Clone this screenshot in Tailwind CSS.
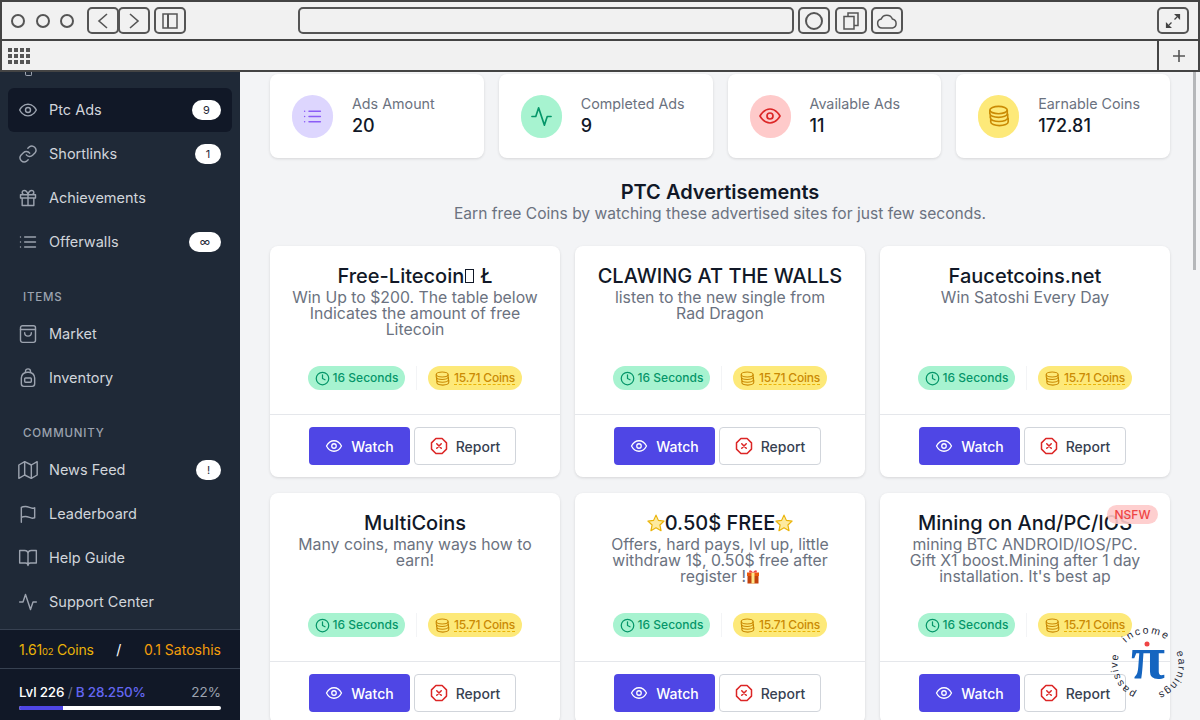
<!DOCTYPE html>
<html lang="en">
<head>
    <meta charset="UTF-8">
    <meta name="viewport" content="width=device-width, initial-scale=1.0">
    <title>PTC Advertisements</title>
    <script src="https://cdn.jsdelivr.net/npm/@tailwindcss/browser@4"></script>
</head>
<body class="bg-[#f3f4f6] font-['Inter',sans-serif]">
<svg class="hidden">
    <defs>
        <symbol id="eye" viewBox="0 0 24 24" fill="none" stroke="currentColor" stroke-width="1.7" stroke-linecap="round" stroke-linejoin="round"><path d="M2 12s3.6-7 10-7 10 7 10 7-3.6 7-10 7-10-7-10-7z"/><circle cx="12" cy="12" r="3"/></symbol>
        <symbol id="list" viewBox="0 0 24 24" fill="none" stroke="currentColor" stroke-width="1.7" stroke-linecap="round" stroke-linejoin="round"><path d="M8 6h13M8 12h13M8 18h13M3 6h.01M3 12h.01M3 18h.01"/></symbol>
        <symbol id="pulse" viewBox="0 0 24 24" fill="none" stroke="currentColor" stroke-width="1.7" stroke-linecap="round" stroke-linejoin="round"><path d="M22 12h-4l-3 9L9 3l-3 9H2"/></symbol>
        <symbol id="coins" viewBox="0 0 24 24" fill="none" stroke="currentColor" stroke-width="1.8"><ellipse cx="11.5" cy="5.5" rx="9.5" ry="4"/><path d="M2 5.5v4c0 2.2 4.3 4 9.5 4s9.5-1.8 9.5-4v-4M2.5 9.5V14c0 2.2 4.3 4 9.5 4s9.5-1.8 9.5-4V9.5M3 14v4.5c0 2.2 4.3 4 9.5 4s9.5-1.8 9.5-4V14"/></symbol>
        <symbol id="clock" viewBox="0 0 24 24" fill="none" stroke="currentColor" stroke-width="2" stroke-linecap="round" stroke-linejoin="round"><circle cx="12" cy="12" r="10"/><path d="M12 6v6l4 2"/></symbol>
        <symbol id="octagon" viewBox="0 0 24 24" fill="none" stroke="currentColor" stroke-width="2" stroke-linecap="round" stroke-linejoin="round"><path d="M7.86 2h8.28L22 7.86v8.28L16.14 22H7.86L2 16.14V7.86z"/><path d="M15 9l-6 6M9 9l6 6"/></symbol>
        <symbol id="star" viewBox="0 0 24 24"><path d="M12 1.5l3.2 7 7.6.9-5.6 5.2 1.5 7.6-6.7-3.8-6.7 3.8 1.5-7.6L1.2 9.4l7.6-.9z" fill="#fdeaa0" stroke="#eab308" stroke-width="1.6" stroke-linejoin="round"/></symbol>
    </defs>
</svg>

<div class="w-[1200px] h-[720px] overflow-hidden relative flex flex-col">
    <!-- browser chrome -->
    <header class="h-[41px] shrink-0 bg-[#f1f1f1] border-t-2 border-b-2 border-x-2 border-[#444] flex items-center text-[#444] relative z-10">
        <div class="flex items-center gap-[10.5px] ml-[9px]">
            <span class="w-[14px] h-[14px] rounded-full border-2 border-[#555]"></span>
            <span class="w-[14px] h-[14px] rounded-full border-2 border-[#555]"></span>
            <span class="w-[14px] h-[14px] rounded-full border-2 border-[#555]"></span>
        </div>
        <div class="flex ml-[13px]">
            <span class="w-[32px] h-[27px] rounded-[5px] border-2 border-[#555] flex items-center justify-center">
                <svg class="w-[12px] h-[16px]" viewBox="0 0 12 16" fill="none" stroke="#555" stroke-width="1.6"><path d="M10 1L2 8l8 7"/></svg>
            </span>
            <span class="w-[32px] h-[27px] -ml-[1px] rounded-[5px] border-2 border-[#555] flex items-center justify-center">
                <svg class="w-[12px] h-[16px]" viewBox="0 0 12 16" fill="none" stroke="#555" stroke-width="1.6"><path d="M2 1l8 7-8 7"/></svg>
            </span>
        </div>
        <span class="ml-[4px] w-[32px] h-[27px] rounded-[5px] border-2 border-[#555] flex items-center justify-center">
            <svg class="w-[16px] h-[16px]" viewBox="0 0 16 16" fill="none" stroke="#555" stroke-width="1.5"><rect x="1" y="1" width="14" height="14"/><path d="M6 1v14" stroke-width="2"/></svg>
        </span>
        <span class="ml-[111.5px] w-[496px] h-[27px] rounded-[5px] border-2 border-[#555]"></span>
        <span class="ml-[4px] w-[32px] h-[27px] rounded-[5px] border-2 border-[#555] flex items-center justify-center">
            <span class="w-[18px] h-[18px] rounded-full border-2 border-[#555]"></span>
        </span>
        <span class="ml-[5px] w-[32px] h-[27px] rounded-[5px] border-2 border-[#555] flex items-center justify-center">
            <svg class="w-[16px] h-[18px]" viewBox="0 0 16 18" fill="none" stroke="#555" stroke-width="1.5"><rect x="1" y="4.5" width="10" height="12.5"/><path d="M5 4.5V1h10v12.5h-4"/></svg>
        </span>
        <span class="ml-[4px] w-[32px] h-[27px] rounded-[5px] border-2 border-[#555] flex items-center justify-center">
            <svg class="w-[22px] h-[16px]" viewBox="0 0 22 16" fill="none" stroke="#555" stroke-width="1.5"><path d="M6 15a4.5 4.5 0 0 1-.8-8.9A6 6 0 0 1 16.4 6 4.6 4.6 0 0 1 16.5 15z"/></svg>
        </span>
        <span class="ml-auto mr-[9px] w-[32px] h-[27px] rounded-[5px] border-2 border-[#555] flex items-center justify-center">
            <svg class="w-[16px] h-[16px]" viewBox="0 0 16 16" fill="#444" stroke="#444" stroke-width="1.2"><path d="M9.5 6.5L12 4" fill="none"/><path d="M10.5 1.5h4v4z"/><path d="M6.5 9.5L4 12" fill="none"/><path d="M1.5 10.5v4h4z"/></svg>
        </span>
    </header>
    <div class="h-[31px] shrink-0 bg-[#f1f1f1] border-b-2 border-x-2 border-[#444] flex items-center justify-between relative z-10">
        <div class="grid grid-cols-4 gap-[2px] ml-[6px]">
            <i class="w-[4px] h-[4px] bg-[#555]"></i><i class="w-[4px] h-[4px] bg-[#555]"></i><i class="w-[4px] h-[4px] bg-[#555]"></i><i class="w-[4px] h-[4px] bg-[#555]"></i>
            <i class="w-[4px] h-[4px] bg-[#555]"></i><i class="w-[4px] h-[4px] bg-[#555]"></i><i class="w-[4px] h-[4px] bg-[#555]"></i><i class="w-[4px] h-[4px] bg-[#555]"></i>
            <i class="w-[4px] h-[4px] bg-[#555]"></i><i class="w-[4px] h-[4px] bg-[#555]"></i><i class="w-[4px] h-[4px] bg-[#555]"></i><i class="w-[4px] h-[4px] bg-[#555]"></i>
        </div>
        <div class="w-[41px] h-full border-l-2 border-[#444] flex items-center justify-center">
            <svg class="w-[14px] h-[14px]" viewBox="0 0 14 14" stroke="#555" stroke-width="1.6"><path d="M7 1v12M1 7h12"/></svg>
        </div>
    </div>

    <div class="flex flex-1 min-h-0">
        <!-- sidebar -->
        <aside class="w-[240px] shrink-0 bg-[#1f2937] flex flex-col text-[14.5px] text-[#d1d5db]">
            <nav class="flex-1 min-h-0 overflow-hidden px-[8px]">
                <span class="block h-[4px] w-[7px] ml-[17px] mb-[12px] border-x border-b border-[#9ca3af] rounded-b-[2px]"></span>
                <a class="h-[44px] rounded-[6px] bg-[#111827] flex items-center pl-[10px] pr-[11px] gap-[11px]">
                    <svg class="w-[20px] h-[20px] text-[#9ca3af]"><use href="#eye"/></svg><span>Ptc Ads</span>
                    <span class="ml-auto w-[29px] h-[20px] rounded-full bg-white text-[#1f2937] text-[11px] flex items-center justify-center">9</span>
                </a>
                <a class="h-[44px] flex items-center pl-[10px] pr-[11px] gap-[11px]">
                    <svg class="w-[20px] h-[20px] text-[#9ca3af]" viewBox="0 0 24 24" fill="none" stroke="currentColor" stroke-width="1.7" stroke-linecap="round" stroke-linejoin="round"><path d="M10 13a5 5 0 0 0 7.5.5l3-3a5 5 0 0 0-7-7l-1.7 1.7"/><path d="M14 11a5 5 0 0 0-7.5-.5l-3 3a5 5 0 0 0 7 7l1.7-1.7"/></svg><span>Shortlinks</span>
                    <span class="ml-auto w-[26px] h-[20px] rounded-full bg-white text-[#1f2937] text-[11px] flex items-center justify-center">1</span>
                </a>
                <a class="h-[44px] flex items-center pl-[10px] pr-[11px] gap-[11px]">
                    <svg class="w-[20px] h-[20px] text-[#9ca3af]" viewBox="0 0 24 24" fill="none" stroke="currentColor" stroke-width="1.7" stroke-linecap="round" stroke-linejoin="round"><path d="M3 8h18v4H3zM5 12v9h14v-9M12 8v13M12 8H7.5a2.5 2.5 0 0 1 0-5C11 3 12 8 12 8zM12 8h4.5a2.5 2.5 0 0 0 0-5C13 3 12 8 12 8z"/></svg><span>Achievements</span>
                </a>
                <a class="h-[44px] flex items-center pl-[10px] pr-[11px] gap-[11px]">
                    <svg class="w-[20px] h-[20px] text-[#9ca3af]"><use href="#list"/></svg><span>Offerwalls</span>
                    <span class="ml-auto w-[32px] h-[20px] rounded-full bg-white text-[#1f2937] text-[11px] flex items-center justify-center">∞</span>
                </a>
                <p class="h-[11px] mt-[28px] mb-[9px] pl-[15px] flex items-center text-[11.5px] font-medium tracking-[0.8px] text-[#9ca3af]">ITEMS</p>
                <a class="h-[44px] flex items-center pl-[10px] pr-[11px] gap-[11px]">
                    <svg class="w-[20px] h-[20px] text-[#9ca3af]" viewBox="0 0 24 24" fill="none" stroke="currentColor" stroke-width="1.7" stroke-linecap="round" stroke-linejoin="round"><rect x="3" y="2" width="18" height="20" rx="2.5"/><path d="M3 6.5h18M8 10.5a4 4 0 0 0 8 0"/></svg><span>Market</span>
                </a>
                <a class="h-[44px] flex items-center pl-[10px] pr-[11px] gap-[11px]">
                    <svg class="w-[20px] h-[20px] text-[#9ca3af]" viewBox="0 0 24 24" fill="none" stroke="currentColor" stroke-width="1.7" stroke-linecap="round" stroke-linejoin="round"><path d="M4 12a7 7 0 0 1 7-7h2a7 7 0 0 1 7 7v7a3 3 0 0 1-3 3H7a3 3 0 0 1-3-3z"/><path d="M9 5V4a3 3 0 0 1 6 0v1"/><rect x="8" y="12" width="8" height="5" rx="1"/></svg><span>Inventory</span>
                </a>
                <p class="h-[11px] mt-[28px] mb-[9px] pl-[15px] flex items-center text-[11.5px] font-medium tracking-[0.8px] text-[#9ca3af]">COMMUNITY</p>
                <a class="h-[44px] flex items-center pl-[10px] pr-[11px] gap-[11px]">
                    <svg class="w-[20px] h-[20px] text-[#9ca3af]" viewBox="0 0 24 24" fill="none" stroke="currentColor" stroke-width="1.7" stroke-linecap="round" stroke-linejoin="round"><path d="M1 6v16l7-4 8 4 7-4V2l-7 4-8-4z"/><path d="M8 2v16M16 6v16"/></svg><span>News Feed</span>
                    <span class="ml-auto w-[25px] h-[20px] rounded-full bg-white text-[#1f2937] text-[11px] flex items-center justify-center">!</span>
                </a>
                <a class="h-[44px] flex items-center pl-[10px] pr-[11px] gap-[11px]">
                    <svg class="w-[20px] h-[20px] text-[#9ca3af]" viewBox="0 0 24 24" fill="none" stroke="currentColor" stroke-width="1.7" stroke-linecap="round" stroke-linejoin="round"><path d="M4 22V4s1.5-1 5-1 5.5 2 8 2 3-.5 3-.5v12s-1 .5-3 .5-5-2-8-2-5 1-5 1"/></svg><span>Leaderboard</span>
                </a>
                <a class="h-[44px] flex items-center pl-[10px] pr-[11px] gap-[11px]">
                    <svg class="w-[20px] h-[20px] text-[#9ca3af]" viewBox="0 0 24 24" fill="none" stroke="currentColor" stroke-width="1.7" stroke-linecap="round" stroke-linejoin="round"><path d="M2 3h6a4 4 0 0 1 4 4v14a3 3 0 0 0-3-3H2zM22 3h-6a4 4 0 0 0-4 4v14a3 3 0 0 1 3-3h7z"/></svg><span>Help Guide</span>
                </a>
                <a class="h-[44px] flex items-center pl-[10px] pr-[11px] gap-[11px]">
                    <svg class="w-[20px] h-[20px] text-[#9ca3af]"><use href="#pulse"/></svg><span>Support Center</span>
                </a>
            </nav>
            <div class="h-[40px] shrink-0 bg-[#111827] border-y border-[#374151] px-[19px] flex items-center justify-between text-[14px]">
                <span class="text-[#eab308] tracking-[-0.2px]">1.61<span class="text-[9.5px]">02</span> Coins</span>
                <span class="text-white">/</span>
                <span class="text-[#f59e0b]">0.1 Satoshis</span>
            </div>
            <div class="h-[51px] shrink-0 bg-[#111827] px-[19px] pt-[14px]">
                <div class="flex justify-between text-[13.5px] leading-[18px]">
                    <span class="text-white font-medium tracking-[-0.2px]">Lvl 226 <span class="text-[#6b7280] font-normal">/</span> <span class="text-[#6366f1]">B 28.250%</span></span>
                    <span class="text-[#9ca3af]">22%</span>
                </div>
                <div class="h-[4px] mt-[5px] rounded-full bg-white overflow-hidden">
                    <div class="h-full bg-[#4f46e5]" style="width: 22%"></div>
                </div>
            </div>
        </aside>

        <!-- main -->
        <main class="flex-1 min-w-0 relative overflow-hidden px-[30px] text-[#111827]">
            <div class="absolute right-[4px] top-0 w-[3px] h-[198px] bg-[#b5b7ba]"></div>

            <section class="grid grid-cols-4 gap-[15px] mt-[2px]">
                <div class="h-[84px] bg-white rounded-[8px] shadow-[0_1px_3px_rgba(0,0,0,0.12)] flex items-center pl-[22px] gap-[19px]">
                    <span class="w-[41px] h-[43px] rounded-full bg-[#ddd6fe] text-[#8b5cf6] flex items-center justify-center"><svg class="w-[21px] h-[21px]"><use href="#list"/></svg></span>
                    <div class="pt-[2px]"><p class="text-[14.3px] leading-[18px] text-[#6b7280]">Ads Amount</p><p class="text-[18px] leading-[26px] font-medium">20</p></div>
                </div>
                <div class="h-[84px] bg-white rounded-[8px] shadow-[0_1px_3px_rgba(0,0,0,0.12)] flex items-center pl-[22px] gap-[19px]">
                    <span class="w-[41px] h-[43px] rounded-full bg-[#a7f3d0] text-[#059669] flex items-center justify-center"><svg class="w-[23px] h-[23px]"><use href="#pulse"/></svg></span>
                    <div class="pt-[2px]"><p class="text-[14.3px] leading-[18px] text-[#6b7280]">Completed Ads</p><p class="text-[18px] leading-[26px] font-medium">9</p></div>
                </div>
                <div class="h-[84px] bg-white rounded-[8px] shadow-[0_1px_3px_rgba(0,0,0,0.12)] flex items-center pl-[22px] gap-[19px]">
                    <span class="w-[41px] h-[43px] rounded-full bg-[#fecaca] text-[#dc2626] flex items-center justify-center"><svg class="w-[24px] h-[24px]"><use href="#eye"/></svg></span>
                    <div class="pt-[2px]"><p class="text-[14.3px] leading-[18px] text-[#6b7280]">Available Ads</p><p class="text-[18px] leading-[26px] font-medium">11</p></div>
                </div>
                <div class="h-[84px] bg-white rounded-[8px] shadow-[0_1px_3px_rgba(0,0,0,0.12)] flex items-center pl-[22px] gap-[19px]">
                    <span class="w-[41px] h-[43px] rounded-full bg-[#fde979] text-[#ca8a04] flex items-center justify-center"><svg class="w-[22px] h-[22px]"><use href="#coins"/></svg></span>
                    <div class="pt-[2px]"><p class="text-[14.3px] leading-[18px] text-[#6b7280]">Earnable Coins</p><p class="text-[18px] leading-[26px] font-medium">172.81</p></div>
                </div>
            </section>

            <div class="text-center mt-[22px] mb-[22px]">
                <h1 class="text-[20px] leading-[24px] font-semibold">PTC Advertisements</h1>
                <p class="text-[15.6px] leading-[20px] text-[#6b7280]">Earn free Coins by watching these advertised sites for just few seconds.</p>
            </div>

            <section class="grid grid-cols-3 gap-x-[15px] gap-y-[16px]">
                <article class="h-[231px] bg-white rounded-[8px] shadow-[0_1px_3px_rgba(0,0,0,0.12)] flex flex-col">
                    <div class="h-[168px] px-[20px] pt-[18px] text-center">
                        <h2 class="text-[20px] leading-[24px] font-medium">Free-Litecoin<span class="inline-block w-[9px] h-[14px] border border-[#111827] mx-[1px]"></span> Ł</h2>
                        <p class="mt-[2px] text-[15.8px] leading-[16px] text-[#6b7280] h-[48px]">Win Up to $200. The table below Indicates the amount of free Litecoin</p>
                        <div class="flex justify-center items-center mt-[28px]">
                            <span class="h-[24px] w-[97px] rounded-full bg-[#a7f3d0] text-[#059669] text-[12px] font-medium flex items-center justify-center gap-[3px]"><svg class="w-[15px] h-[15px]"><use href="#clock"/></svg>16 Seconds</span>
                            <span class="w-px h-[24px] bg-[#f3f4f6] mx-[11px]"></span>
                            <span class="h-[24px] w-[94px] rounded-full bg-[#fde979] text-[#ca8a04] text-[12px] font-medium flex items-center justify-center gap-[4px]"><svg class="w-[15px] h-[15px]"><use href="#coins"/></svg><span class="border-b border-dashed border-[#eab308] leading-[13px] tracking-[-0.2px]">15.71 Coins</span></span>
                        </div>
                    </div>
                    <div class="flex-1 border-t border-[#e5e7eb] flex justify-center items-start pt-[12px] pr-[5px] gap-[4px]">
                        <button class="w-[101px] h-[38px] rounded-[4px] bg-[#4f46e5] text-white text-[14px] font-medium flex items-center justify-center gap-[8px]"><svg class="w-[18px] h-[18px]"><use href="#eye"/></svg>Watch</button>
                        <button class="w-[102px] h-[38px] rounded-[4px] bg-white border border-[#d1d5db] text-[#374151] text-[14px] font-medium flex items-center justify-center gap-[8px]"><svg class="w-[18px] h-[18px] text-[#dc2626]"><use href="#octagon"/></svg>Report</button>
                    </div>
                </article>
                <article class="h-[231px] bg-white rounded-[8px] shadow-[0_1px_3px_rgba(0,0,0,0.12)] flex flex-col">
                    <div class="h-[168px] px-[20px] pt-[18px] text-center">
                        <h2 class="text-[20px] leading-[24px] font-medium">CLAWING AT THE WALLS</h2>
                        <p class="mt-[2px] text-[15.8px] leading-[16px] text-[#6b7280] h-[48px]">listen to the new single from<br>Rad Dragon</p>
                        <div class="flex justify-center items-center mt-[28px]">
                            <span class="h-[24px] w-[97px] rounded-full bg-[#a7f3d0] text-[#059669] text-[12px] font-medium flex items-center justify-center gap-[3px]"><svg class="w-[15px] h-[15px]"><use href="#clock"/></svg>16 Seconds</span>
                            <span class="w-px h-[24px] bg-[#f3f4f6] mx-[11px]"></span>
                            <span class="h-[24px] w-[94px] rounded-full bg-[#fde979] text-[#ca8a04] text-[12px] font-medium flex items-center justify-center gap-[4px]"><svg class="w-[15px] h-[15px]"><use href="#coins"/></svg><span class="border-b border-dashed border-[#eab308] leading-[13px] tracking-[-0.2px]">15.71 Coins</span></span>
                        </div>
                    </div>
                    <div class="flex-1 border-t border-[#e5e7eb] flex justify-center items-start pt-[12px] pr-[5px] gap-[4px]">
                        <button class="w-[101px] h-[38px] rounded-[4px] bg-[#4f46e5] text-white text-[14px] font-medium flex items-center justify-center gap-[8px]"><svg class="w-[18px] h-[18px]"><use href="#eye"/></svg>Watch</button>
                        <button class="w-[102px] h-[38px] rounded-[4px] bg-white border border-[#d1d5db] text-[#374151] text-[14px] font-medium flex items-center justify-center gap-[8px]"><svg class="w-[18px] h-[18px] text-[#dc2626]"><use href="#octagon"/></svg>Report</button>
                    </div>
                </article>
                <article class="h-[231px] bg-white rounded-[8px] shadow-[0_1px_3px_rgba(0,0,0,0.12)] flex flex-col">
                    <div class="h-[168px] px-[20px] pt-[18px] text-center">
                        <h2 class="text-[20px] leading-[24px] font-medium">Faucetcoins.net</h2>
                        <p class="mt-[2px] text-[15.8px] leading-[16px] text-[#6b7280] h-[48px]">Win Satoshi Every Day</p>
                        <div class="flex justify-center items-center mt-[28px]">
                            <span class="h-[24px] w-[97px] rounded-full bg-[#a7f3d0] text-[#059669] text-[12px] font-medium flex items-center justify-center gap-[3px]"><svg class="w-[15px] h-[15px]"><use href="#clock"/></svg>16 Seconds</span>
                            <span class="w-px h-[24px] bg-[#f3f4f6] mx-[11px]"></span>
                            <span class="h-[24px] w-[94px] rounded-full bg-[#fde979] text-[#ca8a04] text-[12px] font-medium flex items-center justify-center gap-[4px]"><svg class="w-[15px] h-[15px]"><use href="#coins"/></svg><span class="border-b border-dashed border-[#eab308] leading-[13px] tracking-[-0.2px]">15.71 Coins</span></span>
                        </div>
                    </div>
                    <div class="flex-1 border-t border-[#e5e7eb] flex justify-center items-start pt-[12px] pr-[5px] gap-[4px]">
                        <button class="w-[101px] h-[38px] rounded-[4px] bg-[#4f46e5] text-white text-[14px] font-medium flex items-center justify-center gap-[8px]"><svg class="w-[18px] h-[18px]"><use href="#eye"/></svg>Watch</button>
                        <button class="w-[102px] h-[38px] rounded-[4px] bg-white border border-[#d1d5db] text-[#374151] text-[14px] font-medium flex items-center justify-center gap-[8px]"><svg class="w-[18px] h-[18px] text-[#dc2626]"><use href="#octagon"/></svg>Report</button>
                    </div>
                </article>
                <article class="h-[231px] bg-white rounded-[8px] shadow-[0_1px_3px_rgba(0,0,0,0.12)] flex flex-col">
                    <div class="h-[168px] px-[20px] pt-[18px] text-center">
                        <h2 class="text-[20px] leading-[24px] font-medium">MultiCoins</h2>
                        <p class="mt-[2px] text-[15.8px] leading-[16px] text-[#6b7280] h-[48px]">Many coins, many ways how to earn!</p>
                        <div class="flex justify-center items-center mt-[28px]">
                            <span class="h-[24px] w-[97px] rounded-full bg-[#a7f3d0] text-[#059669] text-[12px] font-medium flex items-center justify-center gap-[3px]"><svg class="w-[15px] h-[15px]"><use href="#clock"/></svg>16 Seconds</span>
                            <span class="w-px h-[24px] bg-[#f3f4f6] mx-[11px]"></span>
                            <span class="h-[24px] w-[94px] rounded-full bg-[#fde979] text-[#ca8a04] text-[12px] font-medium flex items-center justify-center gap-[4px]"><svg class="w-[15px] h-[15px]"><use href="#coins"/></svg><span class="border-b border-dashed border-[#eab308] leading-[13px] tracking-[-0.2px]">15.71 Coins</span></span>
                        </div>
                    </div>
                    <div class="flex-1 border-t border-[#e5e7eb] flex justify-center items-start pt-[12px] pr-[5px] gap-[4px]">
                        <button class="w-[101px] h-[38px] rounded-[4px] bg-[#4f46e5] text-white text-[14px] font-medium flex items-center justify-center gap-[8px]"><svg class="w-[18px] h-[18px]"><use href="#eye"/></svg>Watch</button>
                        <button class="w-[102px] h-[38px] rounded-[4px] bg-white border border-[#d1d5db] text-[#374151] text-[14px] font-medium flex items-center justify-center gap-[8px]"><svg class="w-[18px] h-[18px] text-[#dc2626]"><use href="#octagon"/></svg>Report</button>
                    </div>
                </article>
                <article class="h-[231px] bg-white rounded-[8px] shadow-[0_1px_3px_rgba(0,0,0,0.12)] flex flex-col">
                    <div class="h-[168px] px-[20px] pt-[18px] text-center">
                        <h2 class="text-[20px] leading-[24px] font-medium flex items-center justify-center"><svg class="w-[18px] h-[18px]"><use href="#star"/></svg>0.50$ FREE<svg class="w-[18px] h-[18px]"><use href="#star"/></svg></h2>
                        <p class="mt-[2px] text-[15.8px] leading-[16px] text-[#6b7280] h-[48px]">Offers, hard pays, lvl up, little withdraw 1$, 0.50$ free after register !<svg class="inline-block w-[14px] h-[15px] align-[-2px]" viewBox="0 0 14 15"><rect x="1.5" y="5" width="11" height="9.5" fill="#c2410c"/><rect x="1" y="3.5" width="12" height="3.5" fill="#ea580c"/><rect x="5.5" y="3.5" width="3" height="11" fill="#fde68a"/><path d="M7 3.5C5 0 2 1 3.5 3.5zM7 3.5C9 0 12 1 10.5 3.5z" fill="#ef4444"/></svg></p>
                        <div class="flex justify-center items-center mt-[28px]">
                            <span class="h-[24px] w-[97px] rounded-full bg-[#a7f3d0] text-[#059669] text-[12px] font-medium flex items-center justify-center gap-[3px]"><svg class="w-[15px] h-[15px]"><use href="#clock"/></svg>16 Seconds</span>
                            <span class="w-px h-[24px] bg-[#f3f4f6] mx-[11px]"></span>
                            <span class="h-[24px] w-[94px] rounded-full bg-[#fde979] text-[#ca8a04] text-[12px] font-medium flex items-center justify-center gap-[4px]"><svg class="w-[15px] h-[15px]"><use href="#coins"/></svg><span class="border-b border-dashed border-[#eab308] leading-[13px] tracking-[-0.2px]">15.71 Coins</span></span>
                        </div>
                    </div>
                    <div class="flex-1 border-t border-[#e5e7eb] flex justify-center items-start pt-[12px] pr-[5px] gap-[4px]">
                        <button class="w-[101px] h-[38px] rounded-[4px] bg-[#4f46e5] text-white text-[14px] font-medium flex items-center justify-center gap-[8px]"><svg class="w-[18px] h-[18px]"><use href="#eye"/></svg>Watch</button>
                        <button class="w-[102px] h-[38px] rounded-[4px] bg-white border border-[#d1d5db] text-[#374151] text-[14px] font-medium flex items-center justify-center gap-[8px]"><svg class="w-[18px] h-[18px] text-[#dc2626]"><use href="#octagon"/></svg>Report</button>
                    </div>
                </article>
                <article class="h-[231px] bg-white rounded-[8px] shadow-[0_1px_3px_rgba(0,0,0,0.12)] flex flex-col relative">
                    <span class="absolute top-[12px] right-[12px] h-[19px] w-[51px] rounded-full bg-[#fecaca]/90 text-[#ef4444] text-[12px] font-medium flex items-center justify-center">NSFW</span>
                    <div class="h-[168px] px-[20px] pt-[18px] text-center">
                        <h2 class="text-[20px] leading-[24px] font-medium whitespace-nowrap">Mining on And/PC/IOS</h2>
                        <p class="mt-[2px] text-[15.8px] leading-[16px] text-[#6b7280] h-[48px]">mining BTC ANDROID/IOS/PC. Gift X1 boost.Mining after 1 day installation. It's best ap</p>
                        <div class="flex justify-center items-center mt-[28px]">
                            <span class="h-[24px] w-[97px] rounded-full bg-[#a7f3d0] text-[#059669] text-[12px] font-medium flex items-center justify-center gap-[3px]"><svg class="w-[15px] h-[15px]"><use href="#clock"/></svg>16 Seconds</span>
                            <span class="w-px h-[24px] bg-[#f3f4f6] mx-[11px]"></span>
                            <span class="h-[24px] w-[94px] rounded-full bg-[#fde979] text-[#ca8a04] text-[12px] font-medium flex items-center justify-center gap-[4px]"><svg class="w-[15px] h-[15px]"><use href="#coins"/></svg><span class="border-b border-dashed border-[#eab308] leading-[13px] tracking-[-0.2px]">15.71 Coins</span></span>
                        </div>
                    </div>
                    <div class="flex-1 border-t border-[#e5e7eb] flex justify-center items-start pt-[12px] pr-[5px] gap-[4px]">
                        <button class="w-[101px] h-[38px] rounded-[4px] bg-[#4f46e5] text-white text-[14px] font-medium flex items-center justify-center gap-[8px]"><svg class="w-[18px] h-[18px]"><use href="#eye"/></svg>Watch</button>
                        <button class="w-[102px] h-[38px] rounded-[4px] bg-white border border-[#d1d5db] text-[#374151] text-[14px] font-medium flex items-center justify-center gap-[8px]"><svg class="w-[18px] h-[18px] text-[#dc2626]"><use href="#octagon"/></svg>Report</button>
                    </div>
                </article>
            </section>
        </main>
    </div>

    <!-- watermark -->
    <svg class="absolute left-[1103px] top-[619px] w-[90px] h-[90px]" viewBox="0 0 90 90">
        <defs><path id="ring" d="M45 75.5A30.5 30.5 0 1 1 45 14.5A30.5 30.5 0 1 1 45 75.5"/></defs>
        <text font-family="'Liberation Sans',sans-serif" font-size="10.5" fill="#1f2937" letter-spacing="1.5"><textPath href="#ring" startOffset="12">passive</textPath></text>
        <text font-family="'Liberation Sans',sans-serif" font-size="10.5" fill="#1f2937" letter-spacing="2"><textPath href="#ring" startOffset="71">income</textPath></text>
        <text font-family="'Liberation Sans',sans-serif" font-size="10.5" fill="#1f2937" letter-spacing="1.4"><textPath href="#ring" startOffset="131">earnings</textPath></text>
        <circle cx="44" cy="25" r="2.5" fill="#ef4444"/>
        <text x="45" y="59" text-anchor="middle" font-family="'Liberation Serif',serif" font-weight="700" font-size="62" fill="#1565c0">π</text>
    </svg>
</div>
</body>
</html>
